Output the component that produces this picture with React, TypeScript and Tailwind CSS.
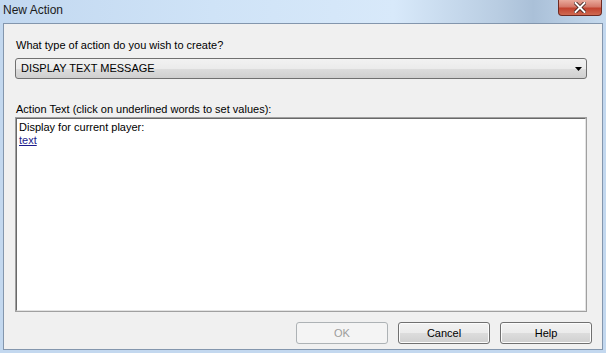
import React from "react";

const font = { fontFamily: '"Liberation Sans", Arial, sans-serif' };

function Btn({ label, disabled }: { label: string; disabled?: boolean }) {
  if (disabled) {
    return (
      <div className="w-[92px] h-[22px] flex items-center justify-center rounded-[3px] border border-[#adb2b5] bg-[#f4f4f4] text-[#9c9c9c] text-[11px] leading-[13px]">
        {label}
      </div>
    );
  }
  return (
    <div className="w-[92px] h-[22px] flex items-center justify-center rounded-[3px] border border-[#707070] bg-[linear-gradient(#f2f2f2_0%,#ebebeb_50%,#dddddd_50%,#cfcfcf_100%)] shadow-[inset_0_0_0_1px_#fcfcfc] text-black text-[11px] leading-[13px]">
      {label}
    </div>
  );
}

export default function App() {
  return (
    <div
      className="w-[606px] h-[353px] flex flex-col bg-[#c3d8ef] overflow-hidden"
      style={font}
    >
      {/* title bar */}
      <div className="relative h-[23px] shrink-0 bg-[linear-gradient(90deg,#c2d8f0_0%,#cfe3f7_35%,#d8e9fa_65%,#b9cde2_82%,#aac0d8_88%,#c6daee_100%)]">
        <div className="pl-[3px] pt-[3px] text-[12px] leading-[14px] text-[#1b1b1b]">New Action</div>
        <div className="absolute left-[558px] top-0 w-[44px] h-[16px] rounded-b-[4px] border border-t-0 border-[#6e2a22] bg-[linear-gradient(#e9a99b_0%,#d5796a_45%,#c2432f_55%,#cf6a52_100%)] flex items-center justify-center">
          <svg width="12" height="11" viewBox="0 0 12 11">
            <path d="M1.5 1 L10.5 10 M10.5 1 L1.5 10" stroke="#3a1a16" strokeWidth="3.6" strokeLinecap="square" />
            <path d="M1.5 1 L10.5 10 M10.5 1 L1.5 10" stroke="#ffffff" strokeWidth="2" strokeLinecap="square" />
          </svg>
        </div>
      </div>
      {/* body with frame */}
      <div className="flex-1 flex px-[3px] pb-[3px]">
        <div className="flex-1 flex flex-col border border-[#8396ad] bg-[#f0f0f0] text-[11px] leading-[13px] text-black">
          <div className="pl-[12px] pt-[15px]">What type of action do you wish to create?</div>
          <div className="ml-[11px] mr-[15px] mt-[6px] h-[21px] rounded-[3px] border border-[#707070] bg-[linear-gradient(#f2f2f2_0%,#ebebeb_50%,#dddddd_50%,#cfcfcf_100%)] flex items-center justify-between pl-[5px] pr-[4px]">
            <span className="leading-[13px]">DISPLAY TEXT MESSAGE</span>
            <svg width="7" height="4" viewBox="0 0 7 4">
              <path d="M0 0 H7 L3.5 4 Z" fill="#000" />
            </svg>
          </div>
          <div className="pl-[12px] mt-[24px]">Action Text (click on underlined words to set values):</div>
          <div className="ml-[11px] mr-[15px] mt-[1px] h-[195px] border border-t-[#a0a0a0] border-l-[#a0a0a0] border-b-[#a0a0a0] border-r-[#a0a0a0] bg-white">
            <div className="h-full border border-t-[#696969] border-l-[#696969] border-b-[#e3e3e3] border-r-[#e3e3e3] pl-[2px] pt-[2px]">
              <div className="leading-[13px]">Display for current player:</div>
              <div className="leading-[13px]">
                <span className="text-[#1c1c8c] underline">text</span>
              </div>
            </div>
          </div>
          <div className="mt-[10px] flex justify-end gap-[10px] pr-[10px]">
            <Btn label="OK" disabled />
            <Btn label="Cancel" />
            <Btn label="Help" />
          </div>
        </div>
      </div>
    </div>
  );
}
